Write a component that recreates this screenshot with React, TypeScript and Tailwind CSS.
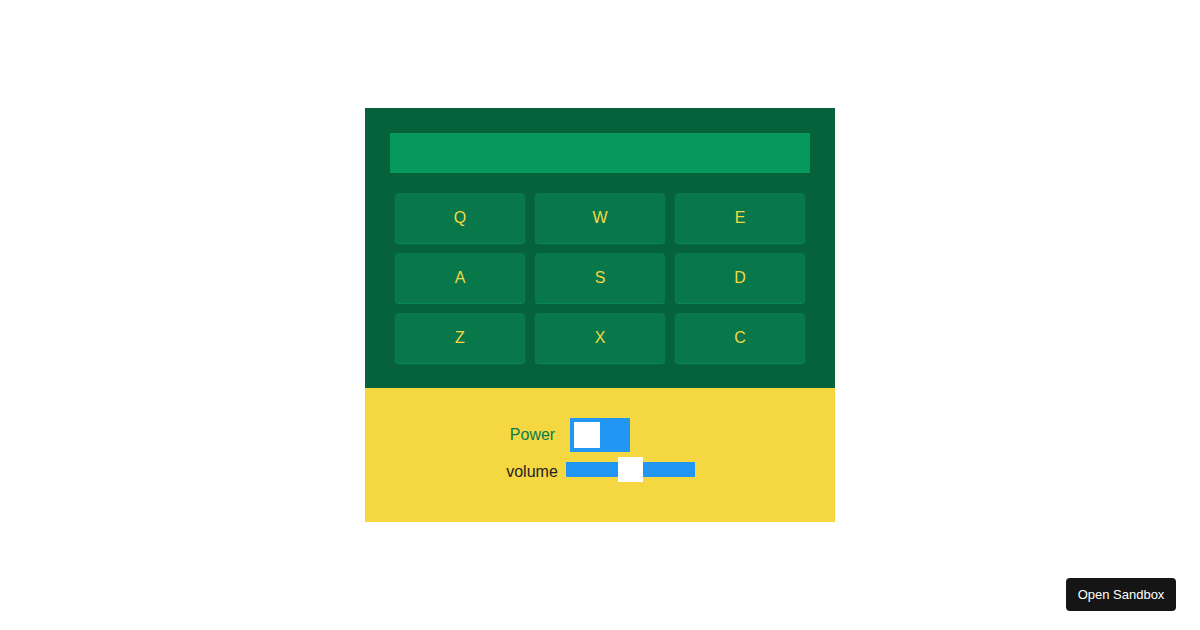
import React, { useState } from 'react';

const keys = ['Q', 'W', 'E', 'A', 'S', 'D', 'Z', 'X', 'C'];

const App: React.FC = () => {
  const [power, setPower] = useState(false);
  const [volume] = useState(0.5);

  return (
    <div
      className="w-[1200px] h-[630px] bg-white relative flex justify-center"
      style={{ fontFamily: '"Liberation Sans", Arial, sans-serif' }}
    >
      <div className="mt-[108px] w-[470px] h-[414px] flex flex-col">
        {/* drum pads */}
        <div className="bg-[#06623b] px-[25px] pt-[25px] pb-[20px]">
          <div className="h-[40px] bg-[#059a5b]" />
          <div className="mt-[15px] grid grid-cols-3">
            {keys.map((k) => (
              <button
                key={k}
                type="button"
                className="m-[5px] h-[50px] rounded-[4px] bg-[#08784a] shadow-[0_1px_1px_0_#0b8f56] text-[#f5d742] text-[16px]"
              >
                {k}
              </button>
            ))}
          </div>
        </div>

        {/* controls */}
        <div className="flex-1 bg-[#f5d742] flex flex-col items-center pt-[30px]">
          <div className="flex items-center gap-[15px] mr-[60px]">
            <span className="text-[16px] text-[#0a7a4a]">Power</span>
            <button
              type="button"
              onClick={() => setPower(!power)}
              className={`w-[60px] h-[34px] bg-[#2196f3] flex items-center px-[4px] ${power ? 'justify-end' : 'justify-start'}`}
            >
              <span className="block w-[26px] h-[26px] bg-white" />
            </button>
          </div>
          <div className="flex items-center gap-[8px] mt-[5px] ml-[1px]">
            <span className="text-[16px] text-[#222] translate-y-[2px]">volume</span>
            <div className="relative w-[129px] h-[25px] flex items-center">
              <div className="w-full h-[15px] bg-[#2196f3]" />
              <div
                className="absolute top-0 w-[25px] h-[25px] bg-white"
                style={{ left: `${volume * 104}px` }}
              />
            </div>
          </div>
        </div>
      </div>

      <button
        type="button"
        className="absolute right-[24px] bottom-[19px] w-[110px] h-[33px] rounded-[4px] bg-[#151515] text-white text-[13px]"
      >
        Open Sandbox
      </button>
    </div>
  );
};

export default App;
